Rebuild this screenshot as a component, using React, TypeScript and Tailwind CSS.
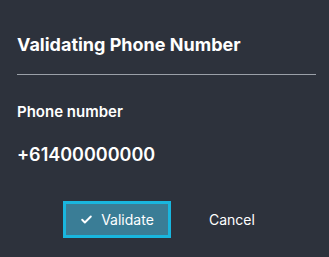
export default function App() {
  return (
    <div
      className="h-[257px] w-[329px] bg-[#2d323c] px-[17px] text-white"
      style={{ fontFamily: "Inter, 'Noto Sans', sans-serif" }}
    >
      <h2 className="pt-[34px] text-[18px] font-bold leading-[22px]">Validating Phone Number</h2>
      <div className="mt-[18px] h-px w-[299px] bg-[#9aa0a8]" />
      <div className="mt-[28px] text-[15px] font-semibold leading-[18px]">Phone number</div>
      <div className="mt-[23px] text-[18px] font-semibold leading-[22px]">+61400000000</div>
      <div className="mt-[35px] flex items-center">
        <button className="ml-[46px] flex h-[37px] w-[108px] items-center justify-center gap-[8px] border-[3px] border-[#19b6de] bg-[#3a7d96] text-[14px] text-white">
          <svg width="13" height="13" viewBox="0 0 24 24" fill="none" stroke="currentColor" strokeWidth="3.5" strokeLinecap="round" strokeLinejoin="round">
            <path d="M4 12.5l5 5L20 6.5" />
          </svg>
          Validate
        </button>
        <button className="ml-[38px] text-[14px] text-white">Cancel</button>
      </div>
    </div>
  );
}
